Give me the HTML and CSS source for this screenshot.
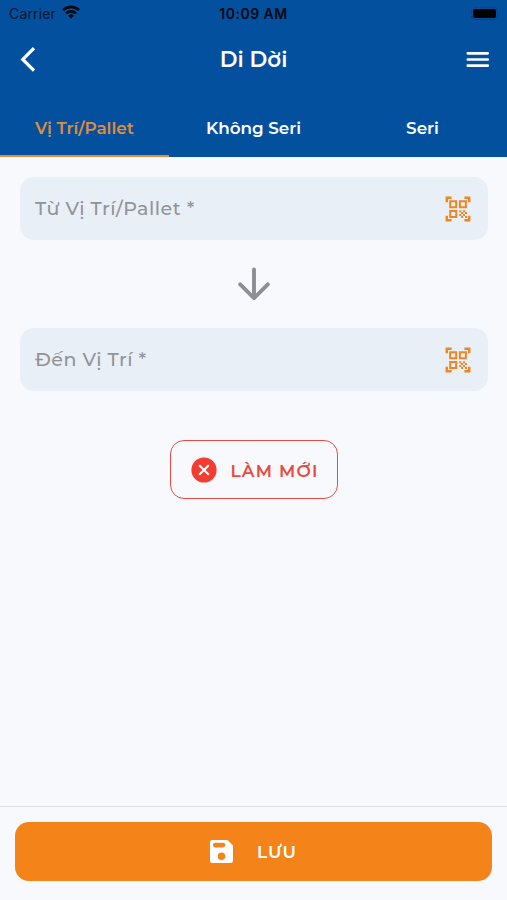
FILE: index.html
```html
<!doctype html>
<html lang="vi">
<head>
  <meta charset="utf-8" />
  <meta name="viewport" content="width=device-width, initial-scale=1" />
  <title>Di Dời</title>
  <link rel="stylesheet" href="styles.css">
</head>

<body>
  <header class="top">
    <div class="status">
      <div class="carrier">
        <span class="carrierName">Carrier</span>
        <svg width="18" height="14" viewBox="0 0 18 14" fill="none" stroke="#03080f" stroke-width="2.6">
          <path d="M1 5.1a11.6 11.6 0 0 1 16 0" />
          <path d="M4 8.4a7.2 7.2 0 0 1 10 0" />
          <path d="M9 13.6 6.1 10.7a4.1 4.1 0 0 1 5.8 0z" fill="#03080f" stroke="none" />
        </svg>
      </div>
      <span class="time">10:09 AM</span>
      <span class="battery"><span class="batteryLevel"></span></span>
    </div>

    <div class="bar">
      <button class="iconBtn" type="button" aria-label="Quay lại">
        <svg width="16" height="26" viewBox="0 0 16 26" fill="none" stroke="#fff" stroke-width="3.3">
          <path d="M14 2.2 2.8 13.4 14 24.6" />
        </svg>
      </button>
      <h1>Di Dời</h1>
      <button class="iconBtn" type="button" aria-label="Menu">
        <svg width="24" height="18" viewBox="0 0 24 18" fill="none" stroke="#fff" stroke-width="2.7" stroke-linecap="round">
          <path d="M1.8 3.3h20M1.8 9.5h20M1.8 15.7h20" />
        </svg>
      </button>
    </div>

    <nav class="tabs">
      <button class="tab tabActive" type="button">Vị Trí/Pallet</button>
      <button class="tab" type="button">Không Seri</button>
      <button class="tab" type="button">Seri</button>
    </nav>
  </header>

  <svg class="symbols" width="0" height="0" aria-hidden="true">
    <symbol id="qr" viewBox="0 0 26 26">
      <g fill="none" stroke="#ee8623" stroke-width="2.5">
        <path d="M1.8 6.3V1.8h4.8M19.4 1.8h4.8v4.5M24.2 19.7v4.5h-4.8M6.6 24.2H1.8v-4.5" />
        <path d="M5.2 5.2h6v6h-6zM14.9 5.2h6v6h-6zM5.2 14.9h6v6h-6z" stroke-width="2" />
      </g>
      <path fill="#ee8623" d="M14.3 14.2h2v2h-2zM18 14.2h2v2h-2zM16.1 16.1h2v2h-2zM20 16.1h2v2h-2zM14.3 18h2v2h-2zM18 18h2v2h-2zM16.1 20h2v2h-2zM20 20h2v2h-2z" />
    </symbol>
  </svg>

  <main class="content">
    <div class="field">
      <span class="fieldLabel">Từ Vị Trí/Pallet *</span>
      <svg width="26" height="26"><use href="#qr" /></svg>
    </div>

    <div class="arrow">
      <svg width="34" height="34" viewBox="0 0 34 34" fill="none" stroke="#8b8e92" stroke-width="3.9" stroke-linecap="round" stroke-linejoin="round">
        <path d="M17 2.5v28M3.2 17.4 17 31.2l13.8-13.8" />
      </svg>
    </div>

    <div class="field">
      <span class="fieldLabel">Đến Vị Trí *</span>
      <svg width="26" height="26"><use href="#qr" /></svg>
    </div>

    <button class="btnReset" type="button">
      <svg width="26" height="26" viewBox="0 0 26 26">
        <circle cx="13" cy="13" r="12.6" fill="#f33d31" />
        <path d="m8.2 8.2 9.6 9.6m0-9.6-9.6 9.6" stroke="#fff" stroke-width="2" />
      </svg>
      <span>LÀM MỚI</span>
    </button>
  </main>

  <footer class="footer">
    <button class="btnSave" type="button">
      <svg width="23" height="23" viewBox="0 0 23 23">
        <path fill="#fff" fill-rule="evenodd" d="M2.5 0H17.6L23 5.4V20.5A2.5 2.5 0 0 1 20.5 23h-18A2.5 2.5 0 0 1 0 20.5v-18A2.5 2.5 0 0 1 2.5 0ZM5.3 2.7a2.4 2.4 0 0 0 0 4.8h7.6a2.4 2.4 0 0 0 0-4.8ZM11.5 12.4a3.8 3.8 0 1 0 0 7.6 3.8 3.8 0 0 0 0-7.6Z" />
      </svg>
      <span>LƯU</span>
    </button>
  </footer>
</body>
</html>
```
FILE: styles.css
```css
:root{
  --blue:#03509f;
  --orange:#f48419;
  --red:#e94b43;
  --bg:#f7f9fd;
  --field:#e9eff7;
  --muted:#919497;
}

*{ box-sizing:border-box; }
body{
  margin:0;
  height:100vh;
  display:flex;
  flex-direction:column;
  font-family: Montserrat, Inter, "Noto Sans", sans-serif;
  background:var(--bg);
}
button{
  margin:0;
  padding:0;
  border:none;
  background:none;
  font-family:inherit;
  cursor:pointer;
}
svg{ display:block; flex:none; }
.symbols{ position:absolute; }

.top{
  height:157px;
  background:var(--blue);
  color:#fff;
}

/* status bar */
.status{
  height:28px;
  padding:0 9px 2px;
  display:grid;
  grid-template-columns:1fr auto 1fr;
  align-items:center;
  color:#03080f;
  font-family: Inter, sans-serif;
}
.carrier{
  display:flex;
  align-items:center;
  gap:6px;
}
.carrierName{
  font-size:14px;
  letter-spacing:.15px;
  opacity:.8;
}
.carrier svg{ margin-top:-2px; }
.time{
  font-size:14px;
  font-weight:600;
  letter-spacing:.5px;
}
.battery{
  justify-self:end;
  width:27px;
  height:13px;
  padding:1px;
  border:1px solid #07407b;
  border-radius:4px;
}
.batteryLevel{
  display:block;
  height:100%;
  background:#000;
  border-radius:2px;
}

.bar{
  height:62px;
  padding:0 17px 0 20px;
  display:grid;
  grid-template-columns:1fr auto 1fr;
  align-items:center;
}
.iconBtn:last-child{ justify-self:end; }
.iconBtn:first-child{ justify-self:start; }
h1{
  margin:0 3px 0 0;
  font-size:21.5px;
  font-weight:600;
}

.tabs{
  height:67px;
  display:grid;
  grid-template-columns:repeat(3, 1fr);
}
.tab{
  padding-top:11px;
  border-bottom:2.5px solid transparent;
  color:#fff;
  font-size:16.8px;
  font-weight:600;
  white-space:nowrap;
}
.tabActive{
  color:#e18c3b;
  border-color:#e18c3b;
}

.content{
  flex:1;
  padding:20px 19px 0 20px;
  display:flex;
  flex-direction:column;
}
.field{
  height:63px;
  padding:0 17px 0 15px;
  display:flex;
  align-items:center;
  justify-content:space-between;
  background:var(--field);
  border-radius:14px;
}
.fieldLabel{
  font-size:19px;
  font-weight:500;
  letter-spacing:.5px;
  color:var(--muted);
}
.arrow{
  height:88px;
  display:grid;
  place-items:center;
}

.btnReset{
  align-self:center;
  width:168px;
  height:59px;
  margin-top:49px;
  padding-left:2px;
  display:flex;
  align-items:center;
  justify-content:center;
  gap:13px;
  border:1.5px solid var(--red);
  border-radius:14px;
  color:var(--red);
  font-size:17px;
  font-weight:600;
  letter-spacing:1.2px;
}
.btnReset span{ margin-top:2px; }

.footer{
  height:94px;
  padding:15px 15px 0;
  border-top:1px solid #dfe2e6;
}
.btnSave{
  width:100%;
  height:59px;
  display:flex;
  align-items:center;
  justify-content:center;
  gap:24px;
  background:var(--orange);
  border-radius:14px;
  color:#fff;
  font-size:17px;
  font-weight:600;
  letter-spacing:1px;
}
```
